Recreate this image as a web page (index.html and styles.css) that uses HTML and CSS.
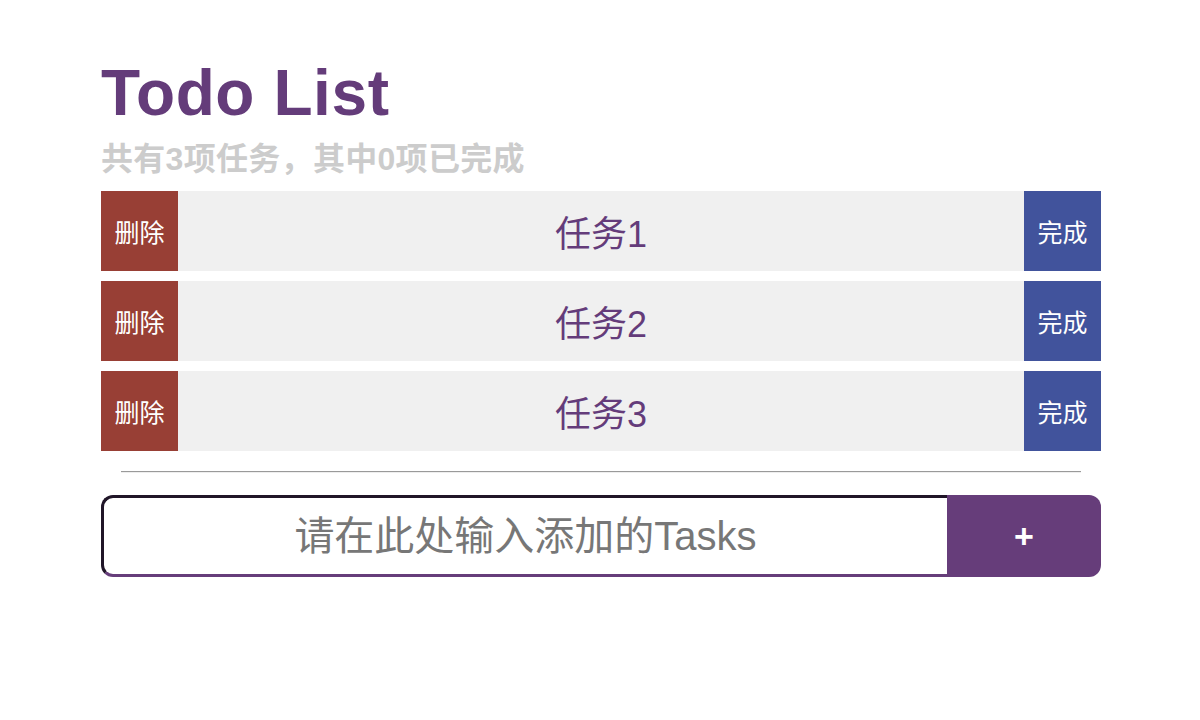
FILE: index.html
```html
<!DOCTYPE html>
<html lang="zh">
<head>
<meta charset="utf-8">
<title>Todo List</title>
<link rel="stylesheet" href="styles.css">
</head>
<body>
<div class="app">
  <h1 class="title">Todo List</h1>
  <p class="summary">共有3项任务，其中0项已完成</p>
  <ul class="tasks">
    <li class="task"><button class="btn-del">删除</button><span class="task-name">任务1</span><button class="btn-done">完成</button></li>
    <li class="task"><button class="btn-del">删除</button><span class="task-name">任务2</span><button class="btn-done">完成</button></li>
    <li class="task"><button class="btn-del">删除</button><span class="task-name">任务3</span><button class="btn-done">完成</button></li>
  </ul>
  <hr class="divider">
  <form class="add-form">
    <input class="add-input" type="text" placeholder="请在此处输入添加的Tasks">
    <button class="add-btn" type="button">+</button>
  </form>
</div>
</body>
</html>
```
FILE: styles.css
```css
html, body {
  margin: 0;
  padding: 0;
  background: #ffffff;
}
body {
  font-family: "Liberation Sans", "Noto Sans CJK SC", sans-serif;
}
.app {
  width: 1000px;
  margin: 0 0 0 101px;
  padding-top: 56px;
}
.title {
  margin: 0;
  font-size: 64px;
  line-height: 74px;
  font-weight: bold;
  letter-spacing: 0.6px;
  color: #643c7a;
}
.summary {
  margin: 9px 0 0;
  font-size: 32px;
  line-height: 40px;
  font-weight: bold;
  color: #cccccc;
  letter-spacing: 0.3px;
}
.tasks {
  list-style: none;
  margin: 12px 0 0;
  padding: 0;
  display: flex;
  flex-direction: column;
  gap: 10px;
}
.task {
  display: flex;
  height: 80px;
  background: #f0f0f0;
}
.btn-del, .btn-done {
  flex: 0 0 77px;
  border: none;
  padding: 0;
  color: #ffffff;
  font-family: "Liberation Sans", "Noto Sans CJK SC", sans-serif;
  font-size: 25px;
}
.btn-del {
  background: #983f35;
}
.btn-done {
  background: #41539c;
}
.task-name {
  flex: 1;
  display: flex;
  align-items: center;
  justify-content: center;
  font-size: 36px;
  color: #643c7a;
}
.divider {
  width: 96%;
  margin: 20px auto 22px;
  border: none;
  border-top: 1px solid #9a9a9a;
  border-bottom: 1px solid #eeeeee;
  height: 0;
}
.add-form {
  display: flex;
  height: 82px;
  margin: 0;
}
.add-input {
  flex: 0 0 846px;
  width: 846px;
  box-sizing: border-box;
  height: 82px;
  margin: 0;
  padding: 0;
  border-style: solid;
  border-width: 3px 0 3px 3px;
  border-color: #201528 #663d7a #663d7a #201528;
  border-radius: 12px 0 0 12px;
  background: #ffffff;
  text-align: center;
  font-family: "Liberation Sans", "Noto Sans CJK SC", sans-serif;
  font-size: 40px;
  color: #333333;
  outline: none;
}
.add-input::placeholder {
  color: #777777;
}
.add-btn {
  flex: 1 1 auto;
  min-width: 0;
  height: 82px;
  border: none;
  margin: 0;
  padding: 0;
  background: #663d7a;
  border-radius: 0 12px 12px 0;
  color: #ffffff;
  font-family: "Liberation Sans", sans-serif;
  font-size: 34px;
  font-weight: bold;
}
```
